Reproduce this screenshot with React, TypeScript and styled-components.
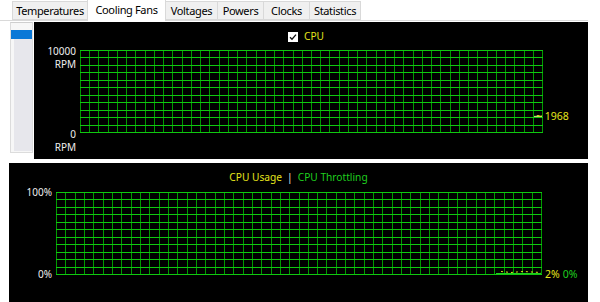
import React from 'react';
import styled, { createGlobalStyle } from 'styled-components';

const GlobalStyle = createGlobalStyle`
  html, body {
    margin: 0;
    padding: 0;
    background: #ffffff;
  }
  * {
    box-sizing: border-box;
  }
`;

const YELLOW = '#e4e41c';
const GREEN = '#1fcf1f';

const Page = styled.div`
  width: 600px;
  height: 302px;
  overflow: hidden;
  background: #ffffff;
  font-family: 'Noto Sans', 'Open Sans', sans-serif;
  display: flex;
  flex-direction: column;
`;

// Tabs
const TabStrip = styled.div`
  height: 21px;
  display: flex;
  align-items: flex-end;
  padding-left: 13px;
  border-bottom: 1px solid #d9d9d9;
  margin-right: 12px;
`;

const Tab = styled.div<{ $active?: boolean; $w: number }>`
  width: ${({ $w }) => $w}px;
  height: ${({ $active }) => ($active ? 22 : 19)}px;
  margin-bottom: ${({ $active }) => ($active ? -1 : 0)}px;
  margin-left: -1px;
  position: relative;
  z-index: ${({ $active }) => ($active ? 1 : 0)};
  display: flex;
  align-items: center;
  justify-content: center;
  padding-bottom: ${({ $active }) => ($active ? 3 : 0)}px;
  font-size: 11px;
  letter-spacing: -0.35px;
  color: #000;
  background: ${({ $active }) => ($active ? '#ffffff' : '#f0f0f0')};
  border: 1px solid #d9d9d9;
  border-bottom: ${({ $active }) => ($active ? 'none' : '1px solid #d9d9d9')};
`;

// Tab page
const TabPage = styled.div`
  flex: 1;
  display: flex;
  flex-direction: column;
  padding-top: 1px;
`;

const TopRow = styled.div`
  display: flex;
  gap: 1px;
  padding-left: 10px;
`;

const Sidebar = styled.div`
  width: 23px;
  height: 131px;
  border: 1px solid #dcdcdc;
  border-top-color: #cfcfcf;
  background: #f7f7f7;
  padding: 7px 0 0 0;
  display: flex;
  flex-direction: column;
`;

const SideItem = styled.div<{ $selected?: boolean }>`
  height: 9px;
  background: ${({ $selected }) => ($selected ? '#0a78d7' : 'transparent')};
`;

const SideList = styled.div`
  flex: 1;
  margin: 0 0 1px 3px;
  background: #e7e7ec;
`;

const ChartPanel = styled.div<{ $w: number; $h?: number }>`
  width: ${({ $w }) => $w}px;
  height: ${({ $h }) => ($h ? `${$h}px` : 'auto')};
  flex: none;
  align-self: stretch;
  background: #000000;
  display: flex;
  flex-direction: column;
`;

const PanelHeader = styled.div<{ $h: number; $shift?: number }>`
  height: ${({ $h }) => $h}px;
  display: flex;
  justify-content: center;
  align-items: flex-start;
  padding-top: 8px;
  padding-right: ${({ $shift }) => $shift ?? 0}px;
  gap: 5px;
  font-size: 10.2px;
  line-height: 13px;
`;

const Legend = styled.span<{ $color: string }>`
  color: ${({ $color }) => $color};
  display: inline-flex;
  align-items: center;
  gap: 6px;
`;

const Separator = styled.span`
  color: #e8e8e8;
`;

const CheckBox = styled.span`
  width: 10px;
  height: 10px;
  background: #ffffff;
  display: inline-flex;
  align-items: center;
  justify-content: center;
`;

const ChartRow = styled.div<{ $axis: number }>`
  display: grid;
  grid-template-columns: ${({ $axis }) => $axis}px auto 1fr;
  column-gap: 4px;
`;

const AxisColumn = styled.div<{ $top: number; $bottom: number }>`
  margin-top: ${({ $top }) => -$top}px;
  margin-bottom: ${({ $bottom }) => -$bottom}px;
  display: flex;
  flex-direction: column;
  justify-content: space-between;
  align-items: flex-end;
  font-size: 10px;
  line-height: 13px;
  color: #eeeeee;
  text-align: right;
`;

const AxisLabel = styled.div`
  display: flex;
  flex-direction: column;
  align-items: flex-end;
`;

const ValueColumn = styled.div`
  position: relative;
`;

const ValueTag = styled.div`
  position: absolute;
  white-space: nowrap;
  font-size: 10.5px;
  line-height: 12px;
  display: flex;
  gap: 3px;
`;

const ValueText = styled.span<{ $color: string }>`
  color: ${({ $color }) => $color};
`;

const Gap = styled.div`
  height: 4px;
`;

const BottomRow = styled.div`
  flex: 1;
  display: flex;
  padding-left: 9px;
`;

type GridProps = {
  width: number;
  height: number;
  cols: number;
  rows: number;
  children?: React.ReactNode;
};

const ChartGrid = ({ width, height, cols, rows, children }: GridProps) => {
  const verticals = Array.from({ length: cols + 1 }, (_, i) => Math.round((i * width) / cols) + 0.5);
  const horizontals = Array.from({ length: rows + 1 }, (_, i) => Math.round((i * height) / rows) + 0.5);
  return (
    <svg width={width + 1} height={height + 1} style={{ display: 'block' }}>
      {verticals.map((x) => (
        <line key={`v${x}`} x1={x} y1={0} x2={x} y2={height + 1} stroke="#009a00" strokeWidth={1} />
      ))}
      {horizontals.map((y) => (
        <line key={`h${y}`} x1={0} y1={y} x2={width + 1} y2={y} stroke="#10c810" strokeWidth={1} />
      ))}
      {children}
    </svg>
  );
};

const tabs = [
  { label: 'Temperatures', w: 76 },
  { label: 'Cooling Fans', w: 79, active: true },
  { label: 'Voltages', w: 53 },
  { label: 'Powers', w: 47 },
  { label: 'Clocks', w: 47 },
  { label: 'Statistics', w: 52 },
];

const FAN_GRID = { width: 462, height: 82 };
const USAGE_GRID = { width: 485, height: 82 };
const fanRpm = 1968;
const fanY = FAN_GRID.height * (1 - fanRpm / 10000);

export default function App() {
  return (
    <>
      <GlobalStyle />
      <Page>
        <TabStrip>
          {tabs.map((t) => (
            <Tab key={t.label} $active={t.active} $w={t.w}>
              {t.label}
            </Tab>
          ))}
        </TabStrip>
        <TabPage>
          <TopRow>
            <Sidebar>
              <SideItem $selected />
              <SideList />
            </Sidebar>
            <ChartPanel $w={554} $h={137}>
              <PanelHeader $h={28} $shift={10}>
                <Legend $color={YELLOW}>
                  <CheckBox>
                    <svg width="8" height="8" viewBox="0 0 8 8">
                      <path d="M1 4.2 L3 6.2 L7 1.6" fill="none" stroke="#111" strokeWidth="1.3" />
                    </svg>
                  </CheckBox>
                  CPU
                </Legend>
              </PanelHeader>
              <ChartRow $axis={42}>
                <AxisColumn $top={5} $bottom={21}>
                  <AxisLabel>
                    <span>10000</span>
                    <span>RPM</span>
                  </AxisLabel>
                  <AxisLabel>
                    <span>0</span>
                    <span>RPM</span>
                  </AxisLabel>
                </AxisColumn>
                <ChartGrid width={FAN_GRID.width} height={FAN_GRID.height} cols={50} rows={11}>
                  <polyline
                    points={`${FAN_GRID.width - 8},${fanY + 0.5} ${FAN_GRID.width},${fanY + 0.5}`}
                    stroke="#e8e8a0"
                    strokeWidth={1}
                    fill="none"
                  />
                </ChartGrid>
                <ValueColumn>
                  <ValueTag style={{ top: fanY - 6, left: -11 }}>
                    <ValueText $color={YELLOW}>~ {fanRpm}</ValueText>
                  </ValueTag>
                </ValueColumn>
              </ChartRow>
            </ChartPanel>
          </TopRow>
          <Gap />
          <BottomRow>
            <ChartPanel $w={579}>
              <PanelHeader $h={29}>
                <Legend $color={YELLOW}>CPU Usage</Legend>
                <Separator>|</Separator>
                <Legend $color={GREEN}>CPU Throttling</Legend>
              </PanelHeader>
              <ChartRow $axis={43}>
                <AxisColumn $top={6} $bottom={6}>
                  <AxisLabel>
                    <span>100%</span>
                  </AxisLabel>
                  <AxisLabel>
                    <span>0%</span>
                  </AxisLabel>
                </AxisColumn>
                <ChartGrid width={USAGE_GRID.width} height={USAGE_GRID.height} cols={52} rows={11}>
                  <polyline
                    points={`${USAGE_GRID.width - 45},${USAGE_GRID.height - 0.5} ${USAGE_GRID.width},${USAGE_GRID.height - 0.5}`}
                    stroke={GREEN}
                    strokeWidth={1}
                    fill="none"
                  />
                  <polyline
                    points={`${USAGE_GRID.width - 40},${USAGE_GRID.height - 2.5} ${USAGE_GRID.width - 30},${USAGE_GRID.height - 1.5} ${USAGE_GRID.width - 18},${USAGE_GRID.height - 2.5} ${USAGE_GRID.width},${USAGE_GRID.height - 1.5}`}
                    stroke={YELLOW}
                    strokeWidth={1}
                    fill="none"
                    strokeDasharray="2 3"
                  />
                </ChartGrid>
                <ValueColumn>
                  <ValueTag style={{ top: USAGE_GRID.height - 6, left: -1 }}>
                    <ValueText $color={YELLOW}>2%</ValueText>
                    <ValueText $color={GREEN}>0%</ValueText>
                  </ValueTag>
                </ValueColumn>
              </ChartRow>
            </ChartPanel>
          </BottomRow>
        </TabPage>
      </Page>
    </>
  );
}
